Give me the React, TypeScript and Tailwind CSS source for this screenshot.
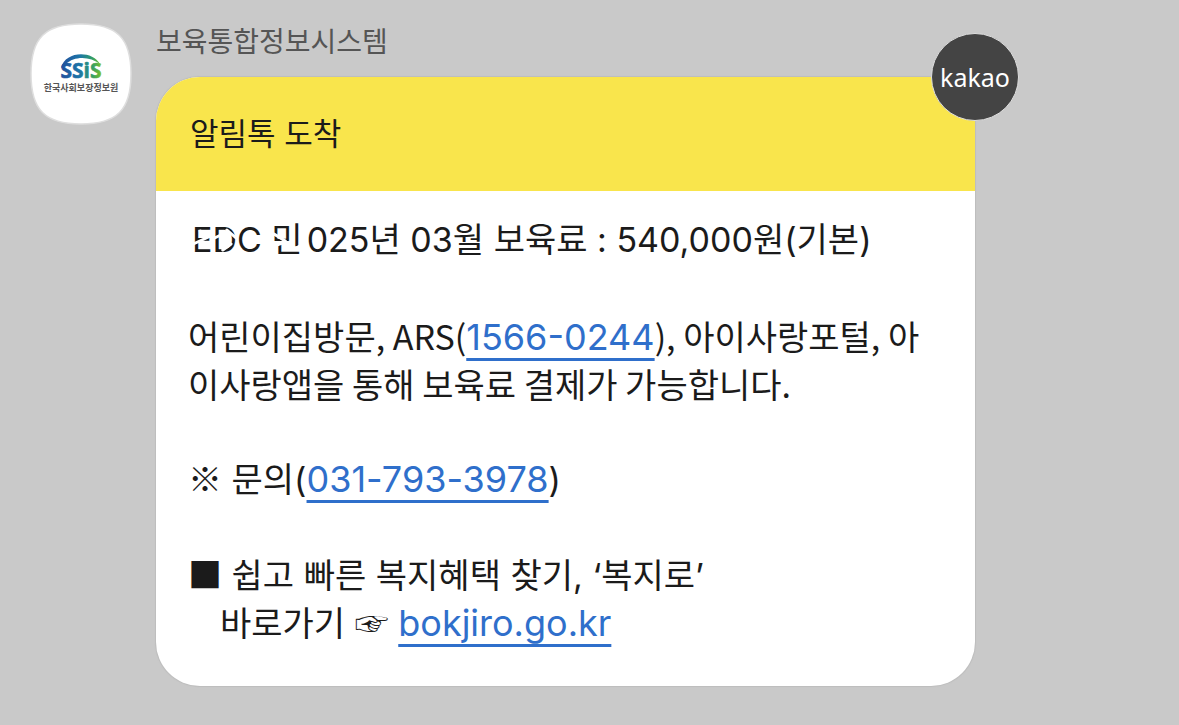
import React from "react";

function SenderAvatar() {
  return (
    <svg viewBox="0 0 102 102" className="h-[102px] w-[102px] shrink-0" role="img" aria-label="SSiS 한국사회보장정보원">
      <defs>
        <linearGradient id="ssis" gradientUnits="userSpaceOnUse" x1="31" y1="0" x2="72" y2="0">
          <stop offset="0" stopColor="#234f9c" />
          <stop offset="0.45" stopColor="#1d75a8" />
          <stop offset="0.75" stopColor="#2f9b6c" />
          <stop offset="1" stopColor="#7fc41f" />
        </linearGradient>
      </defs>
      <path
        d="M51 1C87 1 101 15 101 51S87 101 51 101S1 87 1 51S15 1 51 1Z"
        fill="#ffffff"
        stroke="#dedede"
        strokeWidth="1.5"
      />
      <path d="M31 45C35 28 62 27 70 41C60 33 44 33 36 41Z" fill="url(#ssis)" />
      <text
        x="51"
        y="55"
        textAnchor="middle"
        fontFamily="'Liberation Sans Narrow', 'Open Sans', sans-serif"
        fontSize="21"
        fontWeight="700"
        fill="url(#ssis)"
        stroke="url(#ssis)"
        strokeWidth="0.6"
      >
        SSiS
      </text>
      <text
        x="51"
        y="68"
        textAnchor="middle"
        fontFamily="'Noto Sans CJK KR', sans-serif"
        fontSize="9"
        fontWeight="700"
        fill="#555555"
      >
        한국사회보장정보원
      </text>
    </svg>
  );
}

function MessageLink({ href, children }: { href: string; children: React.ReactNode }) {
  return (
    <a
      href={href}
      className="font-[Inter,sans-serif] text-[36px] leading-none text-[#2f6fcb] underline decoration-[3px] underline-offset-8"
    >
      {children}
    </a>
  );
}

function Mark({ children }: { children: React.ReactNode }) {
  return <span className="font-['Noto_Sans_CJK_KR',sans-serif] leading-none">{children}</span>;
}

function SmudgedName() {
  return (
    <span className="relative mr-1 inline-block pl-1">
      EDC 민
      <svg
        viewBox="0 0 112 48"
        preserveAspectRatio="none"
        aria-hidden="true"
        className="absolute inset-0 h-full w-full"
        fill="none"
        stroke="#ffffff"
        strokeWidth="3"
        strokeLinecap="round"
      >
        <path d="M3 29L20 21M12 15L17 19M26 22L34 18M38 14L47 22M34 34L42 28M84 18L95 25M84 30L92 27M104 33L111 29" />
      </svg>
    </span>
  );
}

export default function App() {
  return (
    <div className="min-h-screen bg-[#c9c9c9] py-[23px] pr-6 pl-[30px] font-[Inter,'Noto_Sans_CJK_KR',sans-serif] text-[#1b1b1b]">
      <main className="flex items-start gap-6">
        <SenderAvatar />
        <div className="min-w-0 max-w-[819px] flex-1">
          <h1 className="mb-4 text-[28px] leading-[38px] text-[#555555]">보육통합정보시스템</h1>
          <article className="relative">
            <div className="overflow-hidden rounded-[44px] bg-white shadow-[0_0_1px_1px_#bdbdbd]">
              <header className="bg-[#f9e54c] px-[34px] py-8">
                <h2 className="text-[31px] leading-[50px]">알림톡 도착</h2>
              </header>
              <div className="px-8 pt-[25px] pb-[38px] text-[34px] leading-[48px]">
                <p>
                  <SmudgedName />
                  025년 03월 보육료 : 540,000원(기본)
                </p>
                <p className="mt-12 font-['Noto_Sans_CJK_KR',sans-serif]">
                  어린이집방문, ARS(<MessageLink href="tel:1566-0244">1566-0244</MessageLink>), 아이사랑포털, 아
                  <br />
                  이사랑앱을 통해 보육료 결제가 가능합니다.
                </p>
                <p className="mt-12">
                  <Mark>※</Mark> 문의(<MessageLink href="tel:031-793-3978">031-793-3978</MessageLink>)
                </p>
                <p className="mt-12">
                  <Mark>■</Mark> 쉽고 빠른 복지혜택 찾기, ‘복지로’
                </p>
                <p className="pl-8">
                  바로가기 <Mark>☞</Mark> <MessageLink href="https://bokjiro.go.kr">bokjiro.go.kr</MessageLink>
                </p>
              </div>
            </div>
            <div className="absolute -top-11 -right-11 flex h-[88px] w-[88px] items-center justify-center rounded-full border border-[#dedede] bg-[#444444] font-['Noto_Sans',sans-serif] text-[25px] leading-8 text-white">
              kakao
            </div>
          </article>
        </div>
      </main>
    </div>
  );
}
